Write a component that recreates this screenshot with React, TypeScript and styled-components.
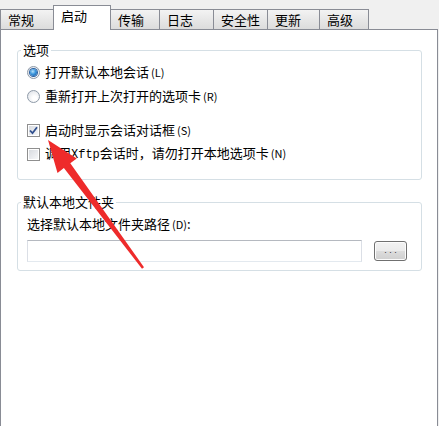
import React from 'react'
import styled, { createGlobalStyle } from 'styled-components'

const GlobalStyle = createGlobalStyle`
  html, body {
    margin: 0;
    padding: 0;
    background: #f0f0f0;
    overflow: hidden;
  }
  body {
    font-family: "Noto Sans CJK SC", "Noto Sans", sans-serif;
    font-size: 13px;
    color: #000;
  }
`

const tabs = [
    { label: '常规', width: 54 },
    { label: '启动', width: 58, active: true },
    { label: '传输', width: 50 },
    { label: '日志', width: 55 },
    { label: '安全性', width: 55 },
    { label: '更新', width: 53 },
    { label: '高级', width: 50 },
]

const Radio = ({ checked }: { checked?: boolean }) => (
    <RadioBox>{checked && <RadioDot />}</RadioBox>
)

const CheckBox = ({ checked }: { checked?: boolean }) => (
    <CheckFrame>
        <CheckInner>
            {checked && (
                <svg width="9" height="9" viewBox="0 0 9 9">
                    <path d="M1 4.5 L3.5 7.2 L8 1.2" fill="none" stroke="#31508f" strokeWidth="1.8" />
                </svg>
            )}
        </CheckInner>
    </CheckFrame>
)

const App = () => {
    return (
        <>
            <GlobalStyle />
            <Window>
                <TabStrip>
                    {tabs.map((t) => (
                        <Tab key={t.label} $width={t.width} $active={!!t.active}>
                            {t.label}
                        </Tab>
                    ))}
                </TabStrip>
                <Panel>
                    <GroupBox $pad="3px 0 13px 9px">
                        <Legend>选项</Legend>
                        <Row>
                            <Radio checked />
                            <span>打开默认本地会话<Key>(L)</Key></span>
                        </Row>
                        <Row>
                            <Radio />
                            <span>重新打开上次打开的选项卡<Key>(R)</Key></span>
                        </Row>
                        <Row $top={10}>
                            <CheckBox checked />
                            <span>启动时显示会话对话框<Key>(S)</Key></span>
                        </Row>
                        <Row>
                            <CheckBox />
                            <span>调用<Latin>Xftp</Latin>会话时，请勿打开本地选项卡<Key>(N)</Key></span>
                        </Row>
                    </GroupBox>
                    <GroupBox $pad="0 0 8px 9px" $top={15}>
                        <Legend>默认本地文件夹</Legend>
                        <PathLabel>选择默认本地文件夹路径<Key>(D)</Key>:</PathLabel>
                        <InputRow>
                            <PathInput type="text" />
                            <BrowseButton>. . .</BrowseButton>
                        </InputRow>
                    </GroupBox>
                </Panel>
                {/* 截图上的红色标注箭头 */}
                <Arrow viewBox="0 0 439 426" width="439" height="426">
                    <polygon
                        points="48,140 76.7,158.5 70.3,163.3 144,267.3 142,268.7 63.9,168.1 57.5,172.9"
                        fill="#ee2b2b"
                    />
                </Arrow>
            </Window>
        </>
    )
}

export default App

const Window = styled.div`
    position: relative;
    width: 439px;
    height: 426px;
    overflow: hidden;
`

const TabStrip = styled.div`
    display: flex;
    align-items: flex-end;
    height: 29px;
`

const Tab = styled.div<{ $width: number; $active: boolean }>`
    position: relative;
    z-index: ${(p) => (p.$active ? 2 : 1)};
    box-sizing: border-box;
    width: ${(p) => p.$width}px;
    height: ${(p) => (p.$active ? 25 : 20)}px;
    margin-right: -1px;
    margin-bottom: ${(p) => (p.$active ? -1 : 0)}px;
    padding-left: 7px;
    border: 1px solid #898c95;
    border-bottom: none;
    background: ${(p) => (p.$active ? '#fff' : 'linear-gradient(#f3f3f3, #e6e6e6 55%, #dcdcdc)')};
    line-height: ${(p) => (p.$active ? 20 : 19)}px;
    white-space: nowrap;
`

const Panel = styled.div`
    box-sizing: border-box;
    width: 438px;
    height: 397px;
    padding-top: 13px;
    background: #fff;
    border: 1px solid #898c95;
    border-bottom: none;
`

const GroupBox = styled.fieldset<{ $pad: string; $top?: number }>`
    box-sizing: border-box;
    width: 405px;
    min-width: 0;
    margin: ${(p) => p.$top || 0}px 0 0 16px;
    padding: ${(p) => p.$pad};
    border: 1px solid #d5dfe5;
    border-radius: 3px;
`

const Legend = styled.legend`
    margin-left: -6px;
    padding: 0 2px;
    line-height: 14px;
`

const Row = styled.div<{ $top?: number }>`
    display: flex;
    align-items: center;
    gap: 5px;
    height: 24px;
    margin-top: ${(p) => p.$top || 0}px;
    line-height: 14px;
    white-space: nowrap;
`

const Key = styled.span`
    margin-left: 2px;
    font-size: 11px;
`

const Latin = styled.span`
    font-family: "Liberation Mono", monospace;
    font-size: 12px;
`

const RadioBox = styled.span`
    box-sizing: border-box;
    display: flex;
    align-items: center;
    justify-content: center;
    width: 13px;
    height: 13px;
    border-radius: 50%;
    border: 1px solid #8e9aa8;
    background: radial-gradient(circle at 60% 65%, #ffffff 20%, #e2e5ea 80%);
`

const RadioDot = styled.span`
    width: 7px;
    height: 7px;
    border-radius: 50%;
    background: radial-gradient(circle at 40% 35%, #b8e3fb 0%, #3a95dc 45%, #134f96 100%);
    box-shadow: 0 0 0 1px #2a5fa0;
`

const CheckFrame = styled.span`
    box-sizing: border-box;
    display: flex;
    width: 13px;
    height: 13px;
    padding: 1px;
    border: 1px solid #8f8f8f;
    background: #fff;
`

const CheckInner = styled.span`
    display: flex;
    align-items: center;
    justify-content: center;
    flex: 1;
    background: linear-gradient(135deg, #d8dbe0, #f6f7f9);
`

const PathLabel = styled.div`
    margin-top: 8px;
    line-height: 14px;
`

const InputRow = styled.div`
    display: flex;
    align-items: center;
    gap: 12px;
    margin-top: 9px;
`

const PathInput = styled.input`
    box-sizing: border-box;
    width: 335px;
    height: 22px;
    margin: 0;
    padding: 0 3px;
    border: 1px solid;
    border-color: #b5b9c0 #dbdfe6 #e3e9ef #dbdfe6;
    outline: none;
    background: #fff;
`

const BrowseButton = styled.button`
    box-sizing: border-box;
    width: 33px;
    height: 20px;
    margin: 0;
    padding: 0 0 3px;
    border: 1px solid #707070;
    border-radius: 3px;
    background: linear-gradient(#f2f2f2, #ebebeb 50%, #dddddd 51%, #cfcfcf);
    box-shadow: inset 0 0 0 1px #fcfcfc;
    font-family: "Liberation Sans", sans-serif;
    font-size: 9px;
    color: #333;
`

const Arrow = styled.svg`
    position: absolute;
    top: 0;
    left: 0;
    pointer-events: none;
`
